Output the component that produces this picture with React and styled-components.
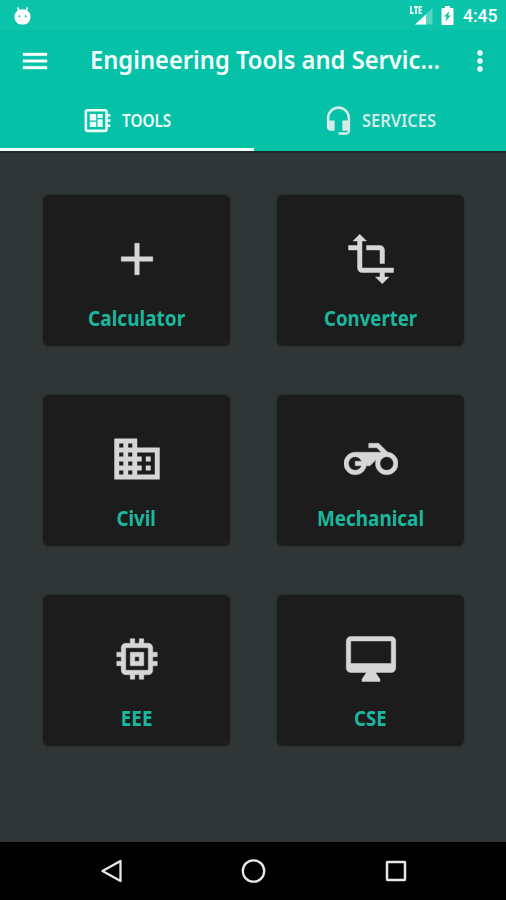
import React from "react";
import styled, { createGlobalStyle } from "styled-components";

const GlobalStyle = createGlobalStyle`
  * { box-sizing: border-box; }
  body { margin: 0; background: #2f3635; }
`;

const Screen = styled.div`
  width: 506px;
  height: 900px;
  display: flex;
  flex-direction: column;
  overflow: hidden;
  background: #2f3635;
  font-family: "Noto Sans", sans-serif;
`;

const StatusBar = styled.header`
  height: 30px;
  flex: none;
  display: flex;
  align-items: center;
  padding: 1px 9px 0 14px;
  background: #0cc4aa;
  color: #fff;
`;

const Spacer = styled.div`
  flex: 1;
`;

const Glyph = styled.svg`
  display: block;
  flex: none;
  fill: currentColor;
  width: ${(p) => p.$w}px;
  height: ${(p) => p.$h ?? p.$w}px;
`;

const SignalGlyph = styled(Glyph)`
  margin-right: 8px;
`;

const CardGlyph = styled(Glyph)`
  stroke: currentColor;
  stroke-width: 0.2;
`;

const Clock = styled.time`
  width: 34px;
  margin-left: 9px;
  font: 500 17.5px/30px Roboto, sans-serif;
  white-space: nowrap;
`;

const Toolbar = styled.div`
  height: 61px;
  flex: none;
  display: flex;
  align-items: center;
  padding: 0 10px 0 19px;
  background: #04c1a8;
  color: #f4fffc;
`;

const Title = styled.h1`
  width: 352px;
  margin: 0 0 0 39px;
  font-size: 24.5px;
  line-height: 58px;
  padding-bottom: 1px;
  font-weight: 600;
  white-space: nowrap;
`;

const Squeeze = styled.span`
  display: inline-block;
  transform: scaleX(${(p) => p.$x});
  transform-origin: ${(p) => p.$from ?? "left"} center;
`;

const MenuButton = styled.button`
  display: grid;
  place-items: center;
  flex: none;
  width: 32px;
  height: 32px;
  padding: 0;
  border: 0;
  background: none;
  color: inherit;
  stroke: currentColor;
  stroke-width: 0.3;
`;

const OverflowButton = styled(MenuButton)`
  margin-left: auto;
`;

const Tabs = styled.nav`
  height: 62px;
  flex: none;
  display: grid;
  grid-template-columns: 254px 252px;
  background: #04c1a8;
  border-bottom: 2px solid #1d2b2b;
`;

const Tab = styled.a`
  display: flex;
  align-items: center;
  padding: 2px 0 0 ${(p) => p.$inset}px;
  gap: ${(p) => p.$gap}px;
  color: ${(p) => (p.$active ? "#ecfffb" : "#d3ece7")};
  border-bottom: 3px solid ${(p) => (p.$active ? "#f2fffc" : "transparent")};
  font-size: 18px;
  line-height: 24px;
  font-weight: 600;
  white-space: nowrap;
`;

const TabLabel = styled(Squeeze)`
  margin-top: -1px;
`;

const Grid = styled.main`
  flex: 1;
  display: grid;
  grid-template-columns: 187px 187px;
  grid-auto-rows: 151.5px;
  column-gap: 47px;
  row-gap: 48.6px;
  padding: 41.7px 0 0 43px;
`;

const Card = styled.section`
  display: flex;
  flex-direction: column;
  align-items: center;
  padding-top: 37.5px;
  border-radius: 6px;
  background: #1c1c1c;
  color: #d6d6d6;
  box-shadow: 0 0 2px rgba(20, 26, 25, 0.7);
`;

const CardLabel = styled.h2`
  margin: 17px 0 0;
  color: #1bb79c;
  font-size: 21px;
  line-height: 30px;
  font-weight: 700;
  white-space: nowrap;
`;

const NavBar = styled.footer`
  height: 58px;
  flex: none;
  display: flex;
  justify-content: space-between;
  align-items: center;
  padding: 0 97px 0 99px;
  background: #000;
  color: #e8e8e8;
`;

const TOOLS = [
  { name: "Calculator", squeeze: 0.905, path: "M19 13h-6v6h-2v-6H5v-2h6V5h2v6h6v2z" },
  {
    name: "Converter",
    squeeze: 0.885,
    path: "M22 18v-2H8V4h2L7 1 4 4h2v2H2v2h4v8c0 1.1.9 2 2 2h8v2h-2l3 3 3-3h-2v-2h4zM10 8h6v6h2V8c0-1.1-.9-2-2-2h-6v2z",
  },
  {
    name: "Civil",
    squeeze: 0.89,
    path: "M12 7V3H2v18h20V7H12zM6 19H4v-2h2v2zm0-4H4v-2h2v2zm0-4H4V9h2v2zm0-4H4V5h2v2zm4 12H8v-2h2v2zm0-4H8v-2h2v2zm0-4H8V9h2v2zm0-4H8V5h2v2zm10 12h-8v-2h2v-2h-2v-2h2v-2h-2V9h8v10zm-2-8h-2v2h2v-2zm0 4h-2v2h2v-2z",
  },
  {
    name: "Mechanical",
    squeeze: 0.9,
    path: "M19.44 9.03L15.41 5H11v2h3.59l2 2H5c-2.8 0-5 2.2-5 5s2.2 5 5 5c2.46 0 4.45-1.69 4.9-4h1.65l2.77-2.77c-.21.54-.32 1.14-.32 1.77 0 2.8 2.2 5 5 5s5-2.2 5-5c0-2.65-1.97-4.77-4.56-4.97zM7.82 15C7.4 16.15 6.28 17 5 17c-1.63 0-3-1.37-3-3s1.37-3 3-3c1.28 0 2.4.85 2.82 2H5v2h2.82zM19 17c-1.66 0-3-1.34-3-3s1.34-3 3-3 3 1.34 3 3-1.34 3-3 3z",
  },
  {
    name: "EEE",
    squeeze: 0.9,
    path: "M15 9H9v6h6V9zm-2 4h-2v-2h2v2zm8-2V9h-2V7c0-1.1-.9-2-2-2h-2V3h-2v2h-2V3H9v2H7c-1.1 0-2 .9-2 2v2H3v2h2v2H3v2h2v2c0 1.1.9 2 2 2h2v2h2v-2h2v2h2v-2h2c1.1 0 2-.9 2-2v-2h2v-2h-2v-2h2zm-4 6H7V7h10v10z",
  },
  {
    name: "CSE",
    squeeze: 0.885,
    path: "M21 2H3c-1.1 0-2 .9-2 2v12c0 1.1.9 2 2 2h7l-2 3v1h8v-1l-2-3h7c1.1 0 2-.9 2-2V4c0-1.1-.9-2-2-2zm0 12H3V4h18v10z",
  },
];

export default function App() {
  return (
    <>
      <GlobalStyle />
      <Screen>
        <StatusBar>
          <Glyph $w={17} $h={18} viewBox="0 0 17 18">
            <path
              fillRule="evenodd"
              d="M4 0l1.5 2.8a8 8 0 0 1 6 0L13 0l1 .5-.8 3.3C15.6 5 16.5 7 16.5 9.7c0 3.3-1.5 5.8-3.3 6.7-2 1.3-7.4 1.3-9.4 0C2 15.5.5 13 .5 9.7.5 7 1.4 5 3.8 3.8L3 .5zM5.3 8.2a1 1 0 1 0 0 2 1 1 0 0 0 0-2zm6.4 0a1 1 0 1 0 0 2 1 1 0 0 0 0-2z"
            />
          </Glyph>
          <Spacer />
          <SignalGlyph $w={23} $h={19} viewBox="0 0 23 19">
            <path d="M0 0h1.7v6.3h2V8H0zM4 0h4v1.7H6.9V8H5.2V1.7H4zM8.5 0H12v1.6h-1.9v1.5h1.6v1.6h-1.6v1.7H12V8H8.5z" opacity=".9" />
            <path d="M22.5 2v16.500H5z" opacity=".3" />
            <path d="M16 8.5v10H5z" />
          </SignalGlyph>
          <Glyph $w={13} $h={19} viewBox="0 0 13 19">
            <path
              fillRule="evenodd"
              d="M4 0h5v2h2.5c.6 0 1 .4 1 1v15c0 .6-.4 1-1 1h-10c-.6 0-1-.4-1-1V3c0-.6.4-1 1-1H4zM8.5 5L3 10.5h2.7L4 15.5l6-6H7.2z"
            />
          </Glyph>
          <Clock>4:45</Clock>
        </StatusBar>

        <Toolbar>
          <MenuButton aria-label="Menu">
            <Glyph $w={32} viewBox="0 0 24 24">
              <path d="M3 18h18v-2H3v2zm0-5h18v-2H3v2zm0-7v2h18V6H3z" />
            </Glyph>
          </MenuButton>
          <Title>
            <Squeeze $x={0.968}>Engineering Tools and Servic...</Squeeze>
          </Title>
          <OverflowButton aria-label="More">
            <Glyph $w={32} viewBox="0 0 24 24">
              <path d="M12 8c1.1 0 2-.9 2-2s-.9-2-2-2-2 .9-2 2 .9 2 2 2zm0 2c-1.1 0-2 .9-2 2s.9 2 2 2 2-.9 2-2-.9-2-2-2zm0 6c-1.1 0-2 .9-2 2s.9 2 2 2 2-.9 2-2-.9-2-2-2z" />
            </Glyph>
          </OverflowButton>
        </Toolbar>

        <Tabs>
          <Tab $active $inset={82} $gap={9}>
            <Glyph $w={31} viewBox="0 0 24 24">
              <path d="M22 9V7h-2V5c0-1.1-.9-2-2-2H4c-1.1 0-2 .9-2 2v14c0 1.1.9 2 2 2h14c1.1 0 2-.9 2-2v-2h2v-2h-2v-2h2v-2h-2V9h2zm-4 10H4V5h14v14zM6 13h5v4H6zm6-6h4v3h-4zM6 7h5v5H6zm6 4h4v6h-4z" />
            </Glyph>
            <TabLabel $x={0.85}>TOOLS</TabLabel>
          </Tab>
          <Tab $inset={69} $gap={8}>
            <Glyph $w={31} viewBox="0 0 24 24">
              <path d="M12 1c-4.97 0-9 4.03-9 9v7c0 1.66 1.34 3 3 3h3v-8H5v-2c0-3.87 3.13-7 7-7s7 3.13 7 7v2h-4v8h4v1h-7v2h6c1.66 0 3-1.34 3-3V10c0-4.97-4.03-9-9-9z" />
            </Glyph>
            <TabLabel $x={0.915}>SERVICES</TabLabel>
          </Tab>
        </Tabs>

        <Grid>
          {TOOLS.map((tool) => (
            <Card key={tool.name}>
              <CardGlyph $w={54} viewBox="0 0 24 24">
                <path d={tool.path} />
              </CardGlyph>
              <CardLabel>
                <Squeeze $x={tool.squeeze} $from="center">
                  {tool.name}
                </Squeeze>
              </CardLabel>
            </Card>
          ))}
        </Grid>

        <NavBar>
          <Glyph $w={26} viewBox="0 0 26 26">
            <path d="M21.5 3v20L3.5 13z" fill="none" stroke="currentColor" strokeWidth="2.3" strokeLinejoin="round" />
          </Glyph>
          <Glyph $w={26} viewBox="0 0 26 26">
            <circle cx="12.5" cy="13" r="10.7" fill="none" stroke="currentColor" strokeWidth="2.3" />
          </Glyph>
          <Glyph $w={26} viewBox="0 0 26 26">
            <rect x="4" y="4" width="18" height="18" rx=".5" fill="none" stroke="currentColor" strokeWidth="2.5" />
          </Glyph>
        </NavBar>
      </Screen>
    </>
  );
}
